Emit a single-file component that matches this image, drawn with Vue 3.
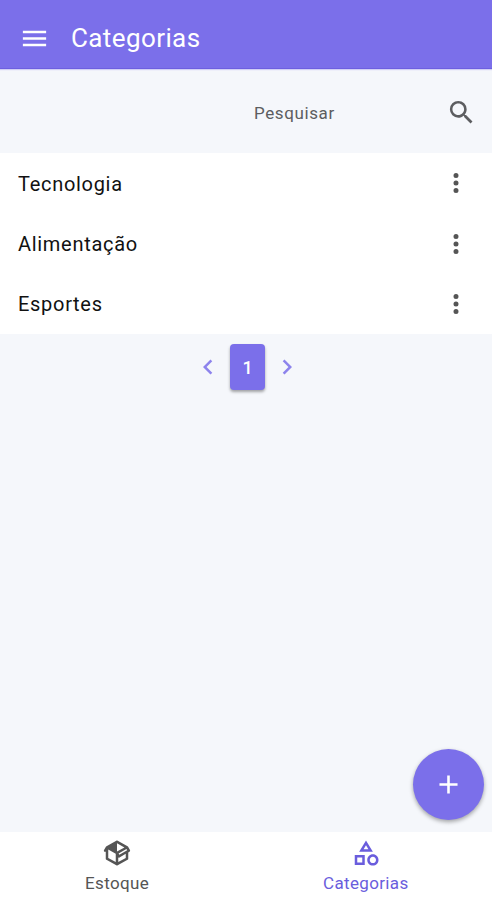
<template>
  <div class="screen">
    <!-- Header -->
    <header class="toolbar">
      <button class="icon-button" aria-label="Menu">
        <svg class="icon menu-icon" viewBox="0 0 24 24"><path :d="icons.menu" /></svg>
      </button>
      <h1 class="title">Categorias</h1>
    </header>

    <!-- Search -->
    <div class="search">
      <span class="search-label">Pesquisar</span>
      <button class="icon-button" aria-label="Pesquisar">
        <svg class="icon search-icon" viewBox="0 0 24 24"><path :d="icons.search" /></svg>
      </button>
    </div>

    <!-- List -->
    <main class="content">
      <ul class="list">
        <li v-for="category in categories" :key="category" class="list-item">
          <span class="list-label">{{ category }}</span>
          <button class="icon-button" aria-label="Opções">
            <svg class="icon" viewBox="0 0 24 24"><path :d="icons.dots" /></svg>
          </button>
        </li>
      </ul>

      <nav class="pagination">
        <button class="icon-button" :disabled="page === 1" aria-label="Anterior">
          <svg class="icon" viewBox="0 0 24 24"><path :d="icons.left" /></svg>
        </button>
        <button class="page">{{ page }}</button>
        <button class="icon-button" disabled aria-label="Próxima">
          <svg class="icon" viewBox="0 0 24 24"><path :d="icons.right" /></svg>
        </button>
      </nav>
    </main>

    <button class="fab" aria-label="Adicionar">
      <svg class="icon fab-icon" viewBox="0 0 24 24"><path :d="icons.plus" /></svg>
    </button>

    <!-- Tabs -->
    <footer class="tabs">
      <button
        v-for="tab in tabs"
        :key="tab.name"
        class="tab"
        :class="{ active: tab.name === current }"
        @click="current = tab.name"
      >
        <svg class="icon" viewBox="0 0 24 24"><path :d="tab.icon" /></svg>
        <span>{{ tab.name }}</span>
      </button>
    </footer>
  </div>
</template>

<script setup>
import { ref } from 'vue'

const icons = {
  menu: 'M3,6H21V8H3V6M3,11H21V13H3V11M3,16H21V18H3V16Z',
  search: 'M9.5,3A6.5,6.5 0 0,1 16,9.5C16,11.11 15.41,12.59 14.44,13.73L14.71,14H15.5L20.5,19L19,20.5L14,15.5V14.71L13.73,14.44C12.59,15.41 11.11,16 9.5,16A6.5,6.5 0 0,1 3,9.5A6.5,6.5 0 0,1 9.5,3M9.5,5C7,5 5,7 5,9.5C5,12 7,14 9.5,14C12,14 14,12 14,9.5C14,7 12,5 9.5,5Z',
  dots: 'M12,16A2,2 0 0,1 14,18A2,2 0 0,1 12,20A2,2 0 0,1 10,18A2,2 0 0,1 12,16M12,10A2,2 0 0,1 14,12A2,2 0 0,1 12,14A2,2 0 0,1 10,12A2,2 0 0,1 12,10M12,4A2,2 0 0,1 14,6A2,2 0 0,1 12,8A2,2 0 0,1 10,6A2,2 0 0,1 12,4Z',
  left: 'M15.41,16.58L10.83,12L15.41,7.41L14,6L8,12L14,18L15.41,16.58Z',
  right: 'M8.59,16.58L13.17,12L8.59,7.41L10,6L16,12L10,18L8.59,16.58Z',
  plus: 'M19,13H13V19H11V13H5V11H11V5H13V11H19V13Z',
  box: 'M2,10.96C1.5,10.68 1.35,10.07 1.63,9.59L3.13,7C3.24,6.8 3.41,6.66 3.6,6.58L11.43,2.18C11.59,2.06 11.79,2 12,2C12.21,2 12.41,2.06 12.57,2.18L20.47,6.62C20.66,6.72 20.82,6.88 20.91,7.08L22.36,9.6C22.64,10.08 22.47,10.69 22,10.96L21,11.54V16.5C21,16.88 20.79,17.21 20.47,17.38L12.57,21.82C12.41,21.94 12.21,22 12,22C11.79,22 11.59,21.94 11.43,21.82L3.53,17.38C3.21,17.21 3,16.88 3,16.5V10.96C2.7,11.13 2.32,11.14 2,10.96M12,4.15V4.15L12,10.85V10.85L17.96,7.5L12,4.15M5,15.91L11,19.29V12.58L5,9.21V15.91M19,15.91V12.69L14,15.59C13.67,15.77 13.3,15.76 13,15.6V19.29L19,15.91M13.85,13.36L20.13,9.73L19.55,8.72L13.27,12.35L13.85,13.36Z',
  shapes: 'M12 2l-5.5 9h11L12 2zm0 3.84L13.93 9h-3.87L12 5.84zM17.5 13c-2.49 0-4.5 2.01-4.5 4.5s2.01 4.5 4.5 4.5 4.5-2.01 4.5-4.5-2.01-4.5-4.5-4.5zm0 7c-1.38 0-2.5-1.12-2.5-2.5s1.12-2.5 2.5-2.5 2.5 1.12 2.5 2.5-1.12 2.5-2.5 2.5zM3 21.5h8v-8H3v8zm2-6h4v4H5v-4z'
}

const categories = ['Tecnologia', 'Alimentação', 'Esportes']

const tabs = [
  { name: 'Estoque', icon: icons.box },
  { name: 'Categorias', icon: icons.shapes }
]

const current = ref('Categorias')
const page = ref(1)
</script>

<style>
body {
  margin: 0;
}
</style>

<style scoped>
.screen {
  position: relative;
  display: flex;
  flex-direction: column;
  height: 100vh;
  background-color: #f5f7fb;
  color: #111;
  font-family: Roboto, sans-serif;
  overflow: hidden;
}

button {
  margin: 0;
  padding: 0;
  border: none;
  background: none;
  color: inherit;
  font: inherit;
  letter-spacing: inherit;
}

.icon {
  display: block;
  width: 30px;
  height: 30px;
  fill: currentColor;
}

.menu-icon,
.search-icon,
.fab-icon {
  width: 31px;
  height: 31px;
}

.toolbar {
  display: flex;
  align-items: center;
  gap: 21px;
  box-sizing: border-box;
  height: 69px;
  padding: 8px 19px 0;
  background-color: #7b6fea;
  border-bottom: 1px solid #6d5fe0;
  box-shadow: 0 1px 1px rgba(123, 111, 234, 0.3);
  color: #fff;
}

.title {
  margin: 0;
  font-size: 26px;
  font-weight: 400;
  letter-spacing: 0.4px;
}

.search {
  display: flex;
  align-items: center;
  justify-content: space-between;
  height: 84px;
  padding: 3px 15px 0 254px;
  box-sizing: border-box;
  color: #5c5d60;
}

.search-label {
  padding-top: 1px;
  font-size: 17px;
  letter-spacing: 0.6px;
}

.content {
  flex: 1;
}

.list {
  margin: 0;
  padding: 0;
  background-color: #fff;
  list-style: none;
}

.list-item {
  display: flex;
  align-items: center;
  justify-content: space-between;
  height: 60.4px;
  padding: 0 21px 0 18px;
  font-size: 20px;
  letter-spacing: 0.7px;
}

.list-label {
  padding-top: 1px;
}

.list-item .icon {
  color: #555;
}

.pagination {
  display: flex;
  align-items: center;
  justify-content: center;
  gap: 7px;
  padding: 10px 0 0 3px;
  color: #7b6fea;
}

.pagination .icon-button {
  opacity: 0.85;
}

.page {
  width: 35px;
  height: 46px;
  border-radius: 4px;
  background-color: #7b6fea;
  box-shadow: 0 2px 3px rgba(0, 0, 0, 0.35);
  color: #fff;
  font-size: 18px;
  font-weight: 500;
}

.fab {
  position: absolute;
  right: 8px;
  bottom: 80px;
  display: flex;
  align-items: center;
  justify-content: center;
  width: 71px;
  height: 71px;
  border-radius: 50%;
  background-color: #7b6fea;
  box-shadow: 0 2px 4px rgba(0, 0, 0, 0.35);
  color: #fff;
}

.tabs {
  display: flex;
  gap: 174px;
  height: 68px;
  padding-left: 85px;
  box-sizing: border-box;
  background-color: #fff;
}

.tab {
  display: flex;
  flex-direction: column;
  align-items: center;
  gap: 5px;
  padding-top: 6px;
  color: #555;
  font-size: 17px;
  line-height: 20px;
  letter-spacing: 0.35px;
}

.tab.active {
  color: #6a5ddd;
}
</style>
